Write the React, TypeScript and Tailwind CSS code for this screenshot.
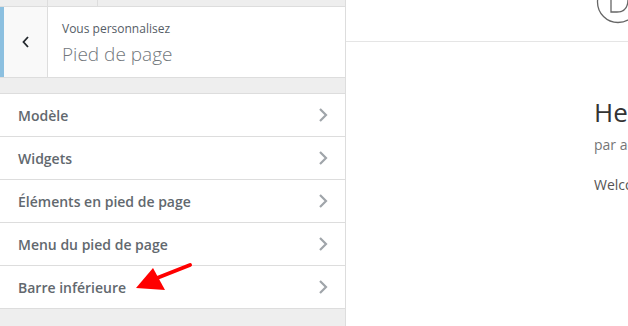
import React from "react";

const Chevron = () => (
  <svg width="10" height="16" viewBox="0 0 10 16" className="shrink-0">
    <path d="M2 2 L8 8 L2 14" fill="none" stroke="#a0a5aa" strokeWidth="2.2" />
  </svg>
);

const items = [
  "Modèle",
  "Widgets",
  "Éléments en pied de page",
  "Menu du pied de page",
  "Barre inférieure",
];

export default function App() {
  return (
    <div
      className="relative flex h-[326px] w-[628px] overflow-hidden bg-white"
      style={{ fontFamily: '"Open Sans", "Noto Sans", sans-serif' }}
    >
      {/* Sidebar */}
      <div className="flex w-[346px] shrink-0 flex-col border-r border-[#dddddd] bg-[#eeeeee]">
        <div className="flex h-[7px] border-b border-[#dddddd]">
          <div className="w-[48px] border-r border-[#dddddd]" />
          <div className="w-[50px] border-r border-[#dddddd]" />
        </div>
        <div className="flex h-[71px] border-b border-[#dddddd] bg-white">
          <div className="flex w-[48px] items-center justify-center border-l-4 border-r border-l-[#8cc0e0] border-r-[#dddddd] bg-[#f9f9f9]">
            <svg width="10" height="14" viewBox="0 0 10 14">
              <path d="M7 2 L2.5 7 L7 12" fill="none" stroke="#23282d" strokeWidth="1.8" />
            </svg>
          </div>
          <div className="flex flex-col justify-center pl-[14px] pt-[3px]">
            <div className="text-[12px] leading-[16px] text-[#555d66]">Vous personnalisez</div>
            <div className="mt-[4px] text-[19px] font-light leading-[26px] text-[#72777c]">Pied de page</div>
          </div>
        </div>
        <div className="h-[16px] border-b border-[#dddddd]" />
        <div className="flex flex-col bg-white">
          {items.map((t) => (
            <div
              key={t}
              className="flex h-[43px] items-center justify-between border-b border-[#dddddd] pl-[18px] pr-[17px]"
            >
              <span className="text-[14px] font-semibold text-[#62686e]">{t}</span>
              <Chevron />
            </div>
          ))}
        </div>
        <div className="flex-1" />
      </div>

      {/* Preview */}
      <div className="relative flex flex-1 flex-col bg-white">
        <div className="h-[42px] border-b border-[#e5e5e5]" />
        <div className="pl-[248px] pt-[54px]">
          <div className="whitespace-nowrap text-[26px] leading-[32px] text-[#333333]">Hello</div>
          <div className="mt-[8px] whitespace-nowrap text-[14px] leading-[18px] text-[#767676]">par admin</div>
          <div className="mt-[22px] whitespace-nowrap text-[14px] leading-[18px] text-[#555555]">Welcome</div>
        </div>
        <svg className="absolute left-[250px] top-[-20px]" width="44" height="44" viewBox="0 0 44 44">
          <circle cx="22" cy="22" r="20.5" fill="none" stroke="#666" strokeWidth="1.3" />
          <path d="M15 6 L15 32 L21 32 Q32 32 32 19 Q32 6 21 6 Z" fill="none" stroke="#666" strokeWidth="1.3" />
        </svg>
      </div>

      {/* Red arrow */}
      <svg className="absolute left-0 top-0" width="628" height="326" viewBox="0 0 628 326">
        <line x1="190" y1="265" x2="152" y2="280" stroke="#ff0000" strokeWidth="4" strokeLinecap="round" />
        <polygon points="136,288 153,268 165,290" fill="#ff0000" />
      </svg>
    </div>
  );
}
